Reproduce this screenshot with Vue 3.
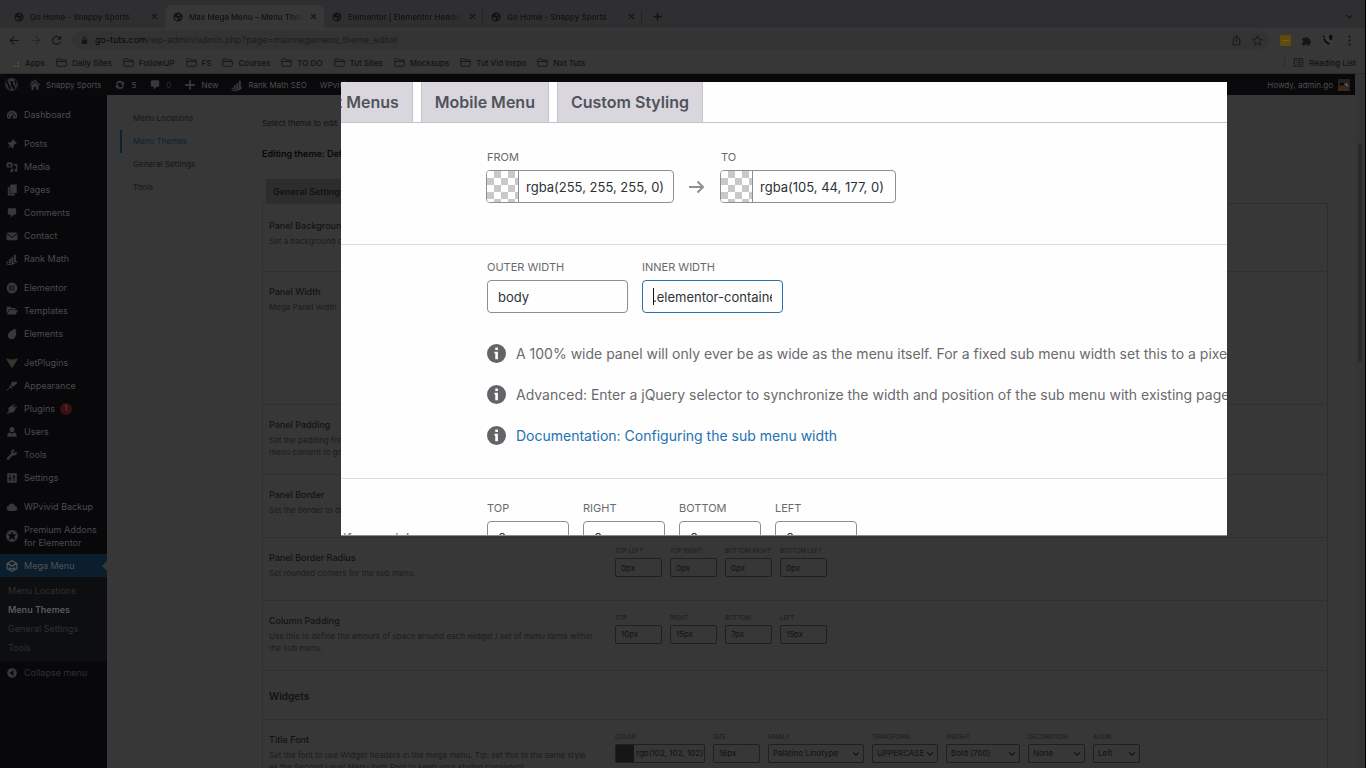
<template>
  <div class="screen">
    <header class="browser">
      <div class="tabs">
        <div v-for="(tab, i) in tabs" :key="i" class="tab" :class="{ 'tab--active': tab.active, 'tab--line': tab.line }">
          <svg class="favicon" viewBox="0 0 20 20"><path :d="icons.globe" fill-rule="evenodd" /></svg>
          <span class="tab-title">{{ tab.title }}</span>
          <button class="plain" aria-label="Close tab">
            <svg class="x" viewBox="0 0 10 10"><path d="M1.500 1.500l7 7M8.500 1.500l-7 7" /></svg>
          </button>
        </div>
        <button class="plain plus" aria-label="New tab">
          <svg class="x x--plus" viewBox="0 0 10 10"><path d="M5 .5v9M.5 5h9" /></svg>
        </button>
        <button class="plain tabs-more" aria-label="Search tabs">
          <svg class="x" viewBox="0 0 10 10"><path d="M1 3l4 4 4-4" /></svg>
        </button>
      </div>

      <div class="toolbar">
        <button class="plain" aria-label="Back"><svg class="line" viewBox="0 0 20 20"><path d="M18 10H3M9.500 3L2.500 10l7 7" /></svg></button>
        <button class="plain faded" aria-label="Forward"><svg class="line" viewBox="0 0 20 20"><path d="M2 10h15M10.500 3l7 7-7 7" /></svg></button>
        <button class="plain" aria-label="Reload"><svg class="line" viewBox="0 0 20 20"><path d="M17 11a7.200 7.200 0 1 1-2-6.300l2 2M17.500 2v5.500H12" /></svg></button>
        <div class="address">
          <svg class="lock" viewBox="0 0 20 20"><path d="M4 8.500h1.500V6a4.500 4.500 0 0 1 9 0v2.500H16V18H4zM7.500 8.500h5V6a2.500 2.500 0 0 0-5 0z" fill-rule="evenodd" /></svg>
          <span class="url"><b>go-tuts.com</b>/wp-admin/admin.php?page=maxmegamenu_theme_editor</span>
          <button class="plain" aria-label="Share"><svg class="line thin" viewBox="0 0 20 20"><path d="M7 7H4v11h12V7h-3M10 13V2M6.500 5L10 1.500 13.500 5" /></svg></button>
          <button class="plain" aria-label="Bookmark"><svg class="line thin" viewBox="0 0 20 20"><path d="M10 1.500l2.600 5.700 6.100.7-4.500 4.200 1.200 6.100-5.400-3-5.400 3 1.200-6.100L1.300 7.900l6.100-.7z" /></svg></button>
        </div>
        <svg class="ext-note" viewBox="0 0 11 11"><rect width="11" height="11" rx="1" /><path d="M2.500 5.500h1M5 5.500h1M7.500 5.500h1" /></svg>
        <svg class="ext" viewBox="0 0 20 20"><path d="M2 6h4.500a2.500 2.500 0 1 1 5 0H16v4.500a2.500 2.500 0 1 1 0 5V19h-4.500a2.300 2.300 0 0 0-4.600 0H2v-4.700a2.300 2.300 0 0 0 0-4.600z" /></svg>
        <svg class="profile" viewBox="0 0 12 12"><circle cx="6" cy="6" r="6" class="profile-bg" /><path d="M1 5c1 3 3 5 6 6l1-2C5 8 3.500 6.500 3 4z" /><path d="M7.500 1c2-1 3.500.5 3 3S9 7 8 6s-1.500-3-.5-5z" /><circle cx="2" cy="2.500" r="1" /></svg>
        <svg class="ext" viewBox="0 0 20 20"><circle cx="10" cy="3" r="2" /><circle cx="10" cy="10" r="2" /><circle cx="10" cy="17" r="2" /></svg>
      </div>

      <nav class="bookmarks">
        <a href="#"><svg class="apps" viewBox="0 0 10 10">
          <rect x="0" y="0" width="2" height="2" fill="#5a2420" /><rect x="4" y="0" width="2" height="2" fill="#5a2420" /><rect x="8" y="0" width="2" height="2" fill="#5a2420" />
          <rect x="0" y="4" width="2" height="2" fill="#1f4a2a" /><rect x="4" y="4" width="2" height="2" fill="#20406e" /><rect x="8" y="4" width="2" height="2" fill="#665012" />
          <rect x="0" y="8" width="2" height="2" fill="#1f4a2a" /><rect x="4" y="8" width="2" height="2" fill="#665012" /><rect x="8" y="8" width="2" height="2" fill="#665012" />
        </svg>Apps</a>
        <a v-for="name in bookmarks" :key="name" href="#">
          <svg class="folder" viewBox="0 0 22 18"><path d="M1.500 3.500q0-2 2-2H8l2 2.500h8.500q2 0 2 2v8.500q0 2-2 2h-15q-2 0-2-2zM1.500 7h19" /></svg>{{ name }}
        </a>
        <a href="#" class="reading"><svg class="folder" viewBox="0 0 20 18"><path d="M1.500 1.500h17v15h-17zM5 5.500h1M8.500 5.500H15M5 9h1M8.500 9H15M5 12.500h1M8.500 12.500H15" /></svg>Reading List</a>
      </nav>
    </header>

    <div class="page">
      <div class="wp">
        <div class="adminbar">
          <a href="#" aria-label="WordPress"><svg class="ico ico--wp" viewBox="0 0 20 20"><path :d="icons.wordpress" fill-rule="evenodd" /></svg></a>
          <a href="#"><svg class="ico" viewBox="0 0 20 20"><path :d="icons.home" fill-rule="evenodd" /></svg>Snappy Sports</a>
          <a href="#"><svg class="ico" viewBox="0 0 20 20"><path :d="icons.update" /></svg>5</a>
          <a href="#" class="off"><svg class="ico" viewBox="0 0 20 20"><path :d="icons.comment" /></svg>0</a>
          <a href="#"><svg class="ico" viewBox="0 0 20 20"><path :d="icons.plus" /></svg>New</a>
          <a href="#"><svg class="ico" viewBox="0 0 20 20"><path :d="icons.rank" /></svg>Rank Math SEO</a>
          <a href="#">WPvivid Backup</a>
          <a href="#" class="howdy">Howdy, admin.go
            <svg class="avatar" viewBox="0 0 12 12"><rect width="12" height="12" fill="#24221d" /><path d="M0 8l4-1 5 1 3 4H0z" fill="#3a2a1c" /><path d="M2 4h4v2H2z" fill="#08080a" /><path d="M6 5l3-1 2 4-3-1z" fill="#55585a" /></svg>
          </a>
        </div>

        <div class="wp-body">
          <aside class="sidebar">
            <ul v-for="(group, g) in menu" :key="g" class="group">
              <li v-for="item in group" :key="item.name">
                <a href="#" :class="{ current: item.current }">
                  <svg class="ico" :class="{ 'ico--jet': item.icon === 'jet' }" viewBox="0 0 20 20"><path :d="icons[item.icon]" fill-rule="evenodd" /></svg>
                  <span class="menu-name">{{ item.name }}</span>
                  <span v-if="item.badge" class="badge">{{ item.badge }}</span>
                </a>
              </li>
            </ul>
            <ul class="submenu">
              <li v-for="s in submenu" :key="s"><a href="#" :class="{ on: s === 'Menu Themes' }">{{ s }}</a></li>
            </ul>
            <button class="plain collapse">
              <svg class="ico" viewBox="0 0 20 20"><path :d="icons.collapse" fill-rule="evenodd" /></svg>Collapse menu
            </button>
          </aside>

          <nav class="subnav">
            <a v-for="s in submenu" :key="s" href="#" :class="{ on: s === 'Menu Themes' }">{{ s }}</a>
          </nav>

          <main class="content">
            <p class="select-theme">Select theme to edit</p>
            <h1>Editing theme: Default</h1>
            <div class="content-tabs"><a href="#">General Settings</a></div>
            <div class="settings">
              <section v-for="row in rows" :key="row.title" class="row" :class="row.size && 'row--' + row.size">
                <div class="row-text">
                  <h2>{{ row.title }}</h2>
                  <p v-if="row.desc">{{ row.desc }}</p>
                </div>
                <div v-if="row.fields" class="fields">
                  <label v-for="f in row.fields" :key="f.label" class="field">
                    <span>{{ f.label }}</span>
                    <span v-if="f.type === 'color'" class="color"><i></i><input type="text" :value="f.value" /></span>
                    <span v-else-if="f.type === 'select'" class="select" :class="'select--' + f.width">
                      <select><option>{{ f.value }}</option></select>
                      <svg viewBox="0 0 10 10"><path d="M1.500 3L5 6.500 8.500 3" /></svg>
                    </span>
                    <input v-else type="text" :value="f.value" />
                  </label>
                </div>
              </section>
            </div>
          </main>
        </div>
      </div>
      <div class="scrollbar"><div class="thumb"></div></div>
    </div>

    <!-- magnified part of the settings form -->
    <div class="lens">
      <div class="lens-tabs">
        <div class="lens-tabs-inner">
          <a v-for="t in lensTabs" :key="t" href="#">{{ t }}</a>
        </div>
      </div>
      <section class="lens-row lens-row--colors">
        <label class="lens-field"><span>From</span>
          <span class="lens-color"><i></i><input type="text" value="rgba(255, 255, 255, 0)" /></span>
        </label>
        <svg class="arrow" viewBox="0 0 16 14"><path d="M0 7h14M8.500 1.500L14 7l-5.500 5.500" /></svg>
        <label class="lens-field"><span>To</span>
          <span class="lens-color lens-color--to"><i></i><input type="text" value="rgba(105, 44, 177, 0)" /></span>
        </label>
      </section>
      <section class="lens-row lens-row--width">
        <div class="lens-fields">
          <label class="lens-field"><span>Outer Width</span><input type="text" value="body" /></label>
          <label class="lens-field lens-field--focus"><span>Inner Width</span><input type="text" value=".elementor-container" /><i class="caret"></i></label>
        </div>
        <ul class="notes">
          <li v-for="n in notes" :key="n.text">
            <svg viewBox="0 0 20 20"><path :d="icons.info" fill-rule="evenodd" /></svg>
            <a v-if="n.link" href="#">{{ n.text }}</a>
            <span v-else>{{ n.text }}</span>
          </li>
        </ul>
      </section>
      <section class="lens-row lens-row--padding">
        <p class="lens-desc">if you wish</p>
        <div class="lens-fields">
          <label v-for="s in ['Top', 'Right', 'Bottom', 'Left']" :key="s" class="lens-field lens-field--short"><span>{{ s }}</span><input type="text" value="0px" /></label>
        </div>
      </section>
    </div>
  </div>
</template>

<script setup>
const tabs = [
  { title: 'Go Home - Snappy Sports' },
  { title: 'Max Mega Menu – Menu Themes', active: true },
  { title: 'Elementor | Elementor Header', line: true },
  { title: 'Go Home - Snappy Sports', line: true },
]
const bookmarks = ['Daily Sites', 'FollowUP', 'FS', 'Courses', 'TO DO', 'Tut Sites', 'Mocksups', 'Tut Vid Inspo', 'Nxt Tuts']
const submenu = ['Menu Locations', 'Menu Themes', 'General Settings', 'Tools']
const lensTabs = ['Flyout Menus', 'Mobile Menu', 'Custom Styling']

const menu = [
  [{ name: 'Dashboard', icon: 'dashboard' }],
  [
    { name: 'Posts', icon: 'pin' },
    { name: 'Media', icon: 'media' },
    { name: 'Pages', icon: 'pages' },
    { name: 'Comments', icon: 'comment' },
    { name: 'Contact', icon: 'mail' },
    { name: 'Rank Math', icon: 'rank' },
  ],
  [
    { name: 'Elementor', icon: 'elementor' },
    { name: 'Templates', icon: 'folder' },
    { name: 'Elements', icon: 'leaf' },
  ],
  [
    { name: 'JetPlugins', icon: 'jet' },
    { name: 'Appearance', icon: 'brush' },
    { name: 'Plugins', icon: 'plug', badge: 1 },
    { name: 'Users', icon: 'user' },
    { name: 'Tools', icon: 'wrench' },
    { name: 'Settings', icon: 'sliders' },
  ],
  [
    { name: 'WPvivid Backup', icon: 'cloud' },
    { name: 'Premium Addons for Elementor', icon: 'star' },
    { name: 'Mega Menu', icon: 'cube', current: true },
  ],
]

const sides = (labels, values) => labels.map((label, i) => ({ label, value: values[i] }))
const rows = [
  { title: 'Panel Background', desc: 'Set a background color for a whole sub menu.', size: 'first' },
  { title: 'Panel Width', desc: 'Mega Panel width.', size: 'tall' },
  { title: 'Panel Padding', desc: 'Set the padding for the whole sub menu. Set these values 0px if you wish\nmenu content to go edge-to-edge.' },
  { title: 'Panel Border', desc: 'Set the border to display on the sub menu.' },
  {
    title: 'Panel Border Radius',
    desc: 'Set rounded corners for the sub menu.',
    fields: sides(['Top Left', 'Top Right', 'Bottom Right', 'Bottom Left'], ['0px', '0px', '0px', '0px']),
  },
  {
    title: 'Column Padding',
    desc: 'Use this to define the amount of space around each widget / set of menu items within\nthe sub menu.',
    fields: sides(['Top', 'Right', 'Bottom', 'Left'], ['10px', '15px', '7px', '15px']),
  },
  { title: 'Widgets', size: 'heading' },
  {
    title: 'Title Font',
    desc: 'Set the font to use Widget headers in the mega menu. Tip: set this to the same style\nas the Second Level Menu Item Font to keep your styling consistent.',
    fields: [
      { label: 'Color', type: 'color', value: 'rgb(102, 102, 102)' },
      { label: 'Size', value: '16px' },
      { label: 'Family', type: 'select', value: 'Palatino Linotype', width: 'xl' },
      { label: 'Transform', type: 'select', value: 'UPPERCASE', width: 'md' },
      { label: 'Weight', type: 'select', value: 'Bold (700)', width: 'lg' },
      { label: 'Decoration', type: 'select', value: 'None', width: 'sm' },
      { label: 'Align', type: 'select', value: 'Left', width: 'xs' },
    ],
  },
]

const notes = [
  { text: 'A 100% wide panel will only ever be as wide as the menu itself. For a fixed sub menu width set this to a pixel value.' },
  { text: 'Advanced: Enter a jQuery selector to synchronize the width and position of the sub menu with existing page element.' },
  { text: 'Documentation: Configuring the sub menu width', link: true },
]

const icons = {
  globe: 'M10 1a9 9 0 1 0 0 18 9 9 0 0 0 0-18zM3.500 9.500l4 1.500 3 1v2l-1.500 3C5.500 16.500 3.200 13.500 3.500 9.500zM11 3.500l3 1.500-1.500 2.500-3 .5-.5-2zM14 9.500l2.500.5c0 2-.8 3.500-2 4.500L13 12z',
  wordpress: 'M10 0a10 10 0 1 0 0 20 10 10 0 0 0 0-20zM10 1a9 9 0 1 1 0 18 9 9 0 0 1 0-18zM2.700 7l4 11A8.300 8.300 0 0 1 2.700 7zM4 4.500a8 8 0 0 1 11.500-.8c-2 .8-1.300 2.300-.2 4 1.200 2 .2 4-.7 6.300l-3-8.500 1-.2V4.500H7v.8l1.200.2 1.300 3.500-1.800 5.300-3-8.800zM10.200 11l2.600 7a8 8 0 0 1-5 0zM17.300 6.500c2 4 .5 8.500-3 10.800l2.500-7.300z',
  home: 'M10 1l9 8.500-1.300 1.300L10 3.800l-7.700 7L1 9.500 4 6.600V3h2v1.800zM4 11l6-5.500 6 5.500v7h-4v-5H8v5H4z',
  update: 'M10 3c2 0 3.800.9 5 2.300L17 4v6h-6l2.300-2.200A4.500 4.500 0 0 0 5.600 9H3.100A7 7 0 0 1 10 3zM3 16v-6h6l-2.300 2.200A4.500 4.500 0 0 0 14.400 11h2.500A7 7 0 0 1 5 14.700z',
  comment: 'M5 2h10q2 0 2 2v7q0 2-2 2h-2l-5 5v-5H5q-2 0-2-2V4q0-2 2-2z',
  plus: 'M8.500 2h3v6.500H18v3h-6.500V18h-3v-6.500H2v-3h6.500z',
  rank: 'M1 14h3v3H1zM5 10h3v7H5zM9 7h3v10H9zM13 3h3.500v14H13zM1 18c7 1 13-1 18-6l-1 4c-4 4-11 5-17 3z',
  dashboard: 'M10 2.500A8.500 8.500 0 0 0 3 16h14a8.500 8.500 0 0 0-7-13.500zM9 4.500h2v2H9zM5 6.500h2v2H5zM3.500 10.500h2v2h-2zM14.500 10.500h2v2h-2zM14.500 6l-3 7a2 2 0 1 1-2-1z',
  pin: 'M11.500 2l6.500 6.500-1.300 1.300-1.200-.3-3.200 3.200.3 3.300-1.600 1.500-3.700-3.700L2 18l4.200-5.800L2.500 8.500 4 7l3.300.3 3.200-3.200-.3-1z',
  media: 'M1 3h2.500l.8-1.200h3L8 3h3v8H1zM6 5a2 2 0 1 0 0 4 2 2 0 0 0 0-4zM13 5h6v10.500a2.500 2.500 0 1 1-2-2.400V8h-4zM10 12h2v4.500A2.500 2.500 0 1 1 10 14z',
  pages: 'M7 1h11v14H7zM3 5h3v11h9v3H3z',
  mail: 'M1 4h18l-9 7.500zM1 6l9 7.500L19 6v11H1z',
  elementor: 'M10 1a9 9 0 1 0 0 18 9 9 0 0 0 0-18zM6 6h2v8H6zM9.500 6H14v1.700H9.500zM9.500 9.200H14v1.700H9.500zM9.500 12.300H14V14H9.500z',
  folder: 'M1 3h6l2 2h7v2.500H5L1 14zM5.500 8.500H20L16 16H1.500z',
  leaf: 'M15 1c3 6 3 12-1 16-3 3-8 2-10-1-3-5 1-10 11-15z',
  jet: 'M1 2.500q9 3 18 0 .8.500 0 2L11 17.500q-1 1-2 0L1 4.500q-1-1.500 0-2z',
  brush: 'M11 2l3 1.500 3-1.500 2 3-7.500 6.500-4-4zM6.500 8.500l4 4-1.500 2-3-1.500-4.500 5.500L1 17l4-4.500z',
  plug: 'M13.500 1.500L15 3l-3 3.500L13.500 8 17 5l1.500 1.500-3.500 3.500 1 1-4 4.500q-3 1.500-5.500-.2L3 18.500 1.500 17l3.200-3.500Q3 11 4.500 8L9 4l1 1z',
  user: 'M10 1.500a4 4 0 1 1 0 8.500 4 4 0 0 1 0-8.500zM2.500 18v-3q0-4 4.500-4l3 2 3-2q4.500 0 4.500 4v3z',
  wrench: 'M17 4l-3.500 3-2-2L15 1.500Q10-.5 8.500 4l.3 3L1.500 15q-1 3 2.500 3.500l7.500-8 3 .5Q19.500 9.500 17 4z',
  sliders: 'M2 2h16v16H2zM6 5v5H4.500v2H6v3h1.500v-3H9v-2H7.500V5zM12.500 5v2H11v2h1.500v6H14V9h1.500V7H14V5z',
  cloud: 'M5 16.500a4.300 4.300 0 0 1-.5-8.500 5.500 5.500 0 0 1 10.500.5 4 4 0 0 1 0 8z',
  star: 'M10 0a10 10 0 1 0 0 20 10 10 0 0 0 0-20zM10 2l2 5.500 6-.5-4.500 4 2 6-5.500-3.500L4.500 17l2-6L2 7l6 .5z',
  cube: 'M10 0l9 5v10l-9 5-9-5V5zM10 2.500L4.500 5.600 10 8.700l5.500-3.100zM3 7.800v6L5 15v-3.500l5 2.800 5-2.800V15l2-1.200v-6l-7 4zM7 15.200v1l3 1.600 3-1.600v-1l-3 1.600z',
  collapse: 'M10 2a8 8 0 1 0 0 16 8 8 0 0 0 0-16zM12.500 5.500v9L6 10z',
  info: 'M10 0a10 10 0 1 0 0 20 10 10 0 0 0 0-20zM8.700 3.800h2.800v2.600H8.700zM7.800 8.200h3.700V16H8.700v-6h-.9z',
}
</script>

<style>
body { background: #373737; }
</style>

<style scoped>
.screen {
  position: relative; height: 100vh; box-sizing: border-box; overflow: hidden; display: flex; flex-direction: column;
  border-right: 1px solid #000; background: #373737; color: #121212;
  font-family: Inter, "Liberation Sans", sans-serif; font-size: 8px;
}
*, *::before { box-sizing: border-box; }
svg { display: block; flex: none; fill: currentColor; }
a { color: inherit; text-decoration: none; }
ul, p, h1, h2 { margin: 0; padding: 0; list-style: none; }
input, select { font: inherit; color: inherit; background: none; margin: 0; outline: none; }
i { font-style: normal; }
.plain { display: flex; align-items: center; padding: 0; border: 0; background: none; color: inherit; font: inherit; }

/* browser */
.browser { flex: none; }
.tabs { display: flex; align-items: flex-end; height: 28px; padding: 0 12px 0 6px; background: #2f2f31; }
.tab { position: relative; display: flex; align-items: center; gap: 6px; width: 159px; height: 23px; padding: 0 7px 0 8px; }
.tab--active { background: #373737; border-radius: 6px 6px 0 0; }
.tab--line::after { content: ""; position: absolute; right: 0; top: 5px; height: 13px; border-right: 1px solid #232324; }
.tab-title {
  flex: 1; overflow: hidden; white-space: nowrap; font-weight: 500;
  mask-image: linear-gradient(90deg, #000 88%, transparent);
}
.favicon { width: 10px; height: 10px; }
.x { width: 7px; height: 7px; fill: none; stroke: currentColor; stroke-width: 1.500; }
.x--plus { width: 9px; height: 9px; }
.plus { height: 23px; margin-left: 11px; }
.tabs-more { height: 23px; margin-left: auto; }
.toolbar { display: flex; align-items: center; gap: 10px; height: 24px; padding: 0 10px 0 9px; color: #161616; }
.line { width: 11px; height: 11px; fill: none; stroke: currentColor; stroke-width: 2; }
.thin { stroke-width: 1.600; }
.faded { color: #262626; }
.address {
  flex: 1; display: flex; align-items: center; gap: 10px; height: 18px; padding: 0 7px 0 8px;
  border-radius: 9px; background: #333333;
}
.lock { width: 9px; height: 9px; margin-right: -4px; }
.url { flex: 1; font-size: 9px; line-height: 16px; color: #1c1c1c; }
.url b { font-weight: 400; color: #080808; }
.ext-note { width: 11px; height: 11px; fill: #604a0e; }
.ext-note path { stroke: #8a7a48; }
.ext { width: 11px; height: 11px; }
.profile { width: 12px; height: 12px; fill: #0e0f14; }
.profile-bg { fill: #3b3b3b; }
.bookmarks { display: flex; align-items: center; gap: 11px; height: 22px; padding: 0 9px 0 10px; border-bottom: 1px solid #2c2c2c; font-weight: 500; }
.bookmarks a { display: flex; align-items: center; gap: 5px; white-space: nowrap; }
.apps { width: 9px; height: 9px; margin-right: 1px; }
.folder { width: 11px; height: 9px; fill: none; stroke: currentColor; stroke-width: 1.600; }
.bookmarks .reading { margin-left: auto; padding-left: 8px; border-left: 1px solid #2c2c2c; }

/* wordpress */
.page { flex: 1; min-height: 0; display: flex; }
.wp { flex: 1; min-width: 0; display: flex; flex-direction: column; }
.scrollbar { width: 10px; padding: 69px 3px 0; background: #353535; }
.thumb { height: 219px; border-radius: 2px; background: #292929; }
.adminbar { flex: none; display: flex; align-items: center; gap: 13px; height: 21px; padding: 0 5px; background: #09090b; color: #4d4d4d; }
.adminbar a { display: flex; align-items: center; gap: 5px; white-space: nowrap; }
.adminbar a:nth-child(2) { margin-left: -2px; }
.adminbar .off { color: #2c2c2d; }
.adminbar .howdy { margin-left: auto; }
.avatar { width: 12px; height: 12px; }
.ico { width: 12px; height: 12px; color: #38383a; }
.ico--wp { width: 13px; height: 13px; }
.ico--jet { color: #353529; }
.wp-body { flex: 1; min-height: 0; display: flex; }

.sidebar { flex: none; width: 107px; padding-top: 8px; background: #08080a; color: #4b4b4c; font-size: 9px; }
.group { margin-bottom: 6px; }
.group:nth-last-child(3) { margin-bottom: 0; }
.group a { position: relative; display: flex; align-items: center; gap: 6px; min-height: 23px; padding: 5px 6px; line-height: 13px; }
.menu-name { max-width: 76px; }
.group a.current { background: #0b1e2d; color: #515354; }
.group a.current .ico { color: #515354; }
.group a.current::after {
  content: ""; position: absolute; right: 0; top: 7px; border: 5px solid transparent; border-left: 0; border-right-color: #373737;
}
.badge { min-width: 12px; margin: -1px; border-radius: 6px; background: #3c1012; color: #5c4c4c; font-size: 7px; line-height: 12px; text-align: center; }
.submenu { padding: 4px 8px; background: #0c0e10; color: #2f3032; }
.submenu a { display: block; line-height: 19px; }
.submenu .on { color: #5a5a5a; font-weight: 600; }
.collapse { gap: 6px; height: 23px; padding: 0 6px; color: #2f3032; }

.subnav { flex: none; width: 155px; padding: 12px 14px 0 13px; color: #161616; line-height: 23px; }
.subnav a { display: block; padding-left: 12px; border-left: 1px solid transparent; }
.subnav a.on { color: #0c2331; border-left: 2px solid #0c2331; padding-left: 11px; }

.content { flex: 1; min-width: 0; padding: 20px 27px 0 0; line-height: 16px; }
h1 { margin-top: 15px; font-size: 9px; font-weight: 600; line-height: 15px; color: #080808; }
.content-tabs { display: flex; margin-top: 18px; padding-left: 4px; }
.content-tabs a { height: 24px; padding: 0 7px; background: #2d2d2d; font-size: 9px; font-weight: 600; line-height: 25px; }
.settings { padding-top: 2px; border: 1px solid #2e2e2e; }
.row { display: grid; grid-template-columns: 346px 1fr; min-height: 63px; padding: 12px 6px 16px; border-bottom: 1px solid #303030; }
.row--first { min-height: 66px; }
.row--tall { min-height: 133px; }
.row--heading { min-height: 49px; padding: 17px 6px 15px; }
h2 { font-size: 9px; font-weight: 500; line-height: 16px; }
.row--heading h2 { font-size: 10px; font-weight: 600; }
.row p { margin-top: 1px; line-height: 12px; color: #1c1c1c; white-space: pre; }
.row-text { width: 335px; }
.fields { display: flex; align-items: center; gap: 8px; margin: -12px 0 -1px; }
.field { display: flex; flex-direction: column; gap: 3px; min-width: 47px; }
.field > span:first-child { font-size: 6px; line-height: 9px; text-transform: uppercase; color: #1a1a1a; }
.field > input { width: 47px; }
.field > input, .color, .select select { height: 19px; padding: 0 5px; border: 1px solid #202021; border-radius: 2px; }
.color { display: flex; width: 90px; padding: 0; }
.color i { flex: none; width: 18px; background: #161616; }
.color input { flex: 1; min-width: 0; border: 0; padding: 0 0 0 2px; }
.select { position: relative; }
.select select { width: 100%; padding: 0 0 0 4px; appearance: none; }
.select svg { position: absolute; right: 4px; top: 6px; width: 8px; height: 8px; fill: none; stroke: currentColor; stroke-width: 1.500; pointer-events: none; }
.select--xl { width: 96px; }
.select--lg { width: 74px; }
.select--md { width: 66px; }
.select--sm { width: 57px; }
.select--xs { width: 47px; }

/* lens */
.lens {
  position: absolute; left: 341px; right: 138px; top: 82px; height: 454px; overflow: hidden; z-index: 2;
  background: #fefefe; color: #2c3338; font-size: 14px; border-bottom: 1px solid #8a8a8a;
}
.lens-tabs { height: 41px; border-bottom: 1px solid #c3c4c7; }
.lens-tabs-inner { display: flex; justify-content: flex-end; gap: 8px; width: 362px; }
.lens-tabs-inner a {
  flex: none; height: 40px; padding: 0 13px; border: 1px solid #c3c4c7; border-width: 0 1px; background: #d9d7dd;
  color: #50535b; font-size: 16px; font-weight: 600; line-height: 40px;
}
.lens-row { position: relative; padding: 14px 0 0 146px; border-bottom: 1px solid #dcdcde; }
.lens-row--colors { display: flex; align-items: flex-start; height: 122px; padding-top: 26px; }
.lens-row--width { height: 234px; }
.lens-row--padding { padding-top: 21px; }
.lens-fields { display: flex; gap: 14px; }
.lens-field { position: relative; display: flex; flex-direction: column; gap: 4px; }
.lens-field > span:first-child { font-size: 11px; line-height: 17px; text-transform: uppercase; color: #6a6a6d; }
.lens-field input { font-size: 13px; }
.lens-field > input { width: 141px; height: 33px; padding: 0 10px; border: 1px solid #8c8f94; border-radius: 4px; }
.lens-field--short > input { width: 82px; }
.lens-field--focus > input { border-color: #2271b1; }
.caret { position: absolute; left: 11px; bottom: 8px; height: 17px; border-left: 1px solid #111; }
.lens-color { display: flex; width: 188px; height: 33px; margin-left: -1px; border: 1px solid #8c8f94; border-radius: 4px; overflow: hidden; }
.lens-color--to { width: 176px; }
.lens-color i {
  flex: none; width: 32px; border-right: 1px solid #8c8f94;
  background: repeating-conic-gradient(#c9c9c9 0 25%, #fff 0 50%) 0 0 / 14px 14px;
}
.lens-color input { flex: 1; min-width: 0; padding: 0 0 0 7px; border: 0; }
.arrow { width: 16px; height: 14px; margin: 31px 16px 0 15px; fill: none; stroke: #8c8f94; stroke-width: 2; }
.notes { margin-top: 20px; }
.notes li { display: flex; align-items: center; gap: 10px; height: 41px; white-space: nowrap; color: #6a6a6d; }
.notes svg { width: 19px; height: 19px; color: #656368; }
.notes a { color: #2271b1; }
.lens-desc { position: absolute; left: 2px; top: 50px; line-height: 20px; color: #6a6a6d; }
</style>
